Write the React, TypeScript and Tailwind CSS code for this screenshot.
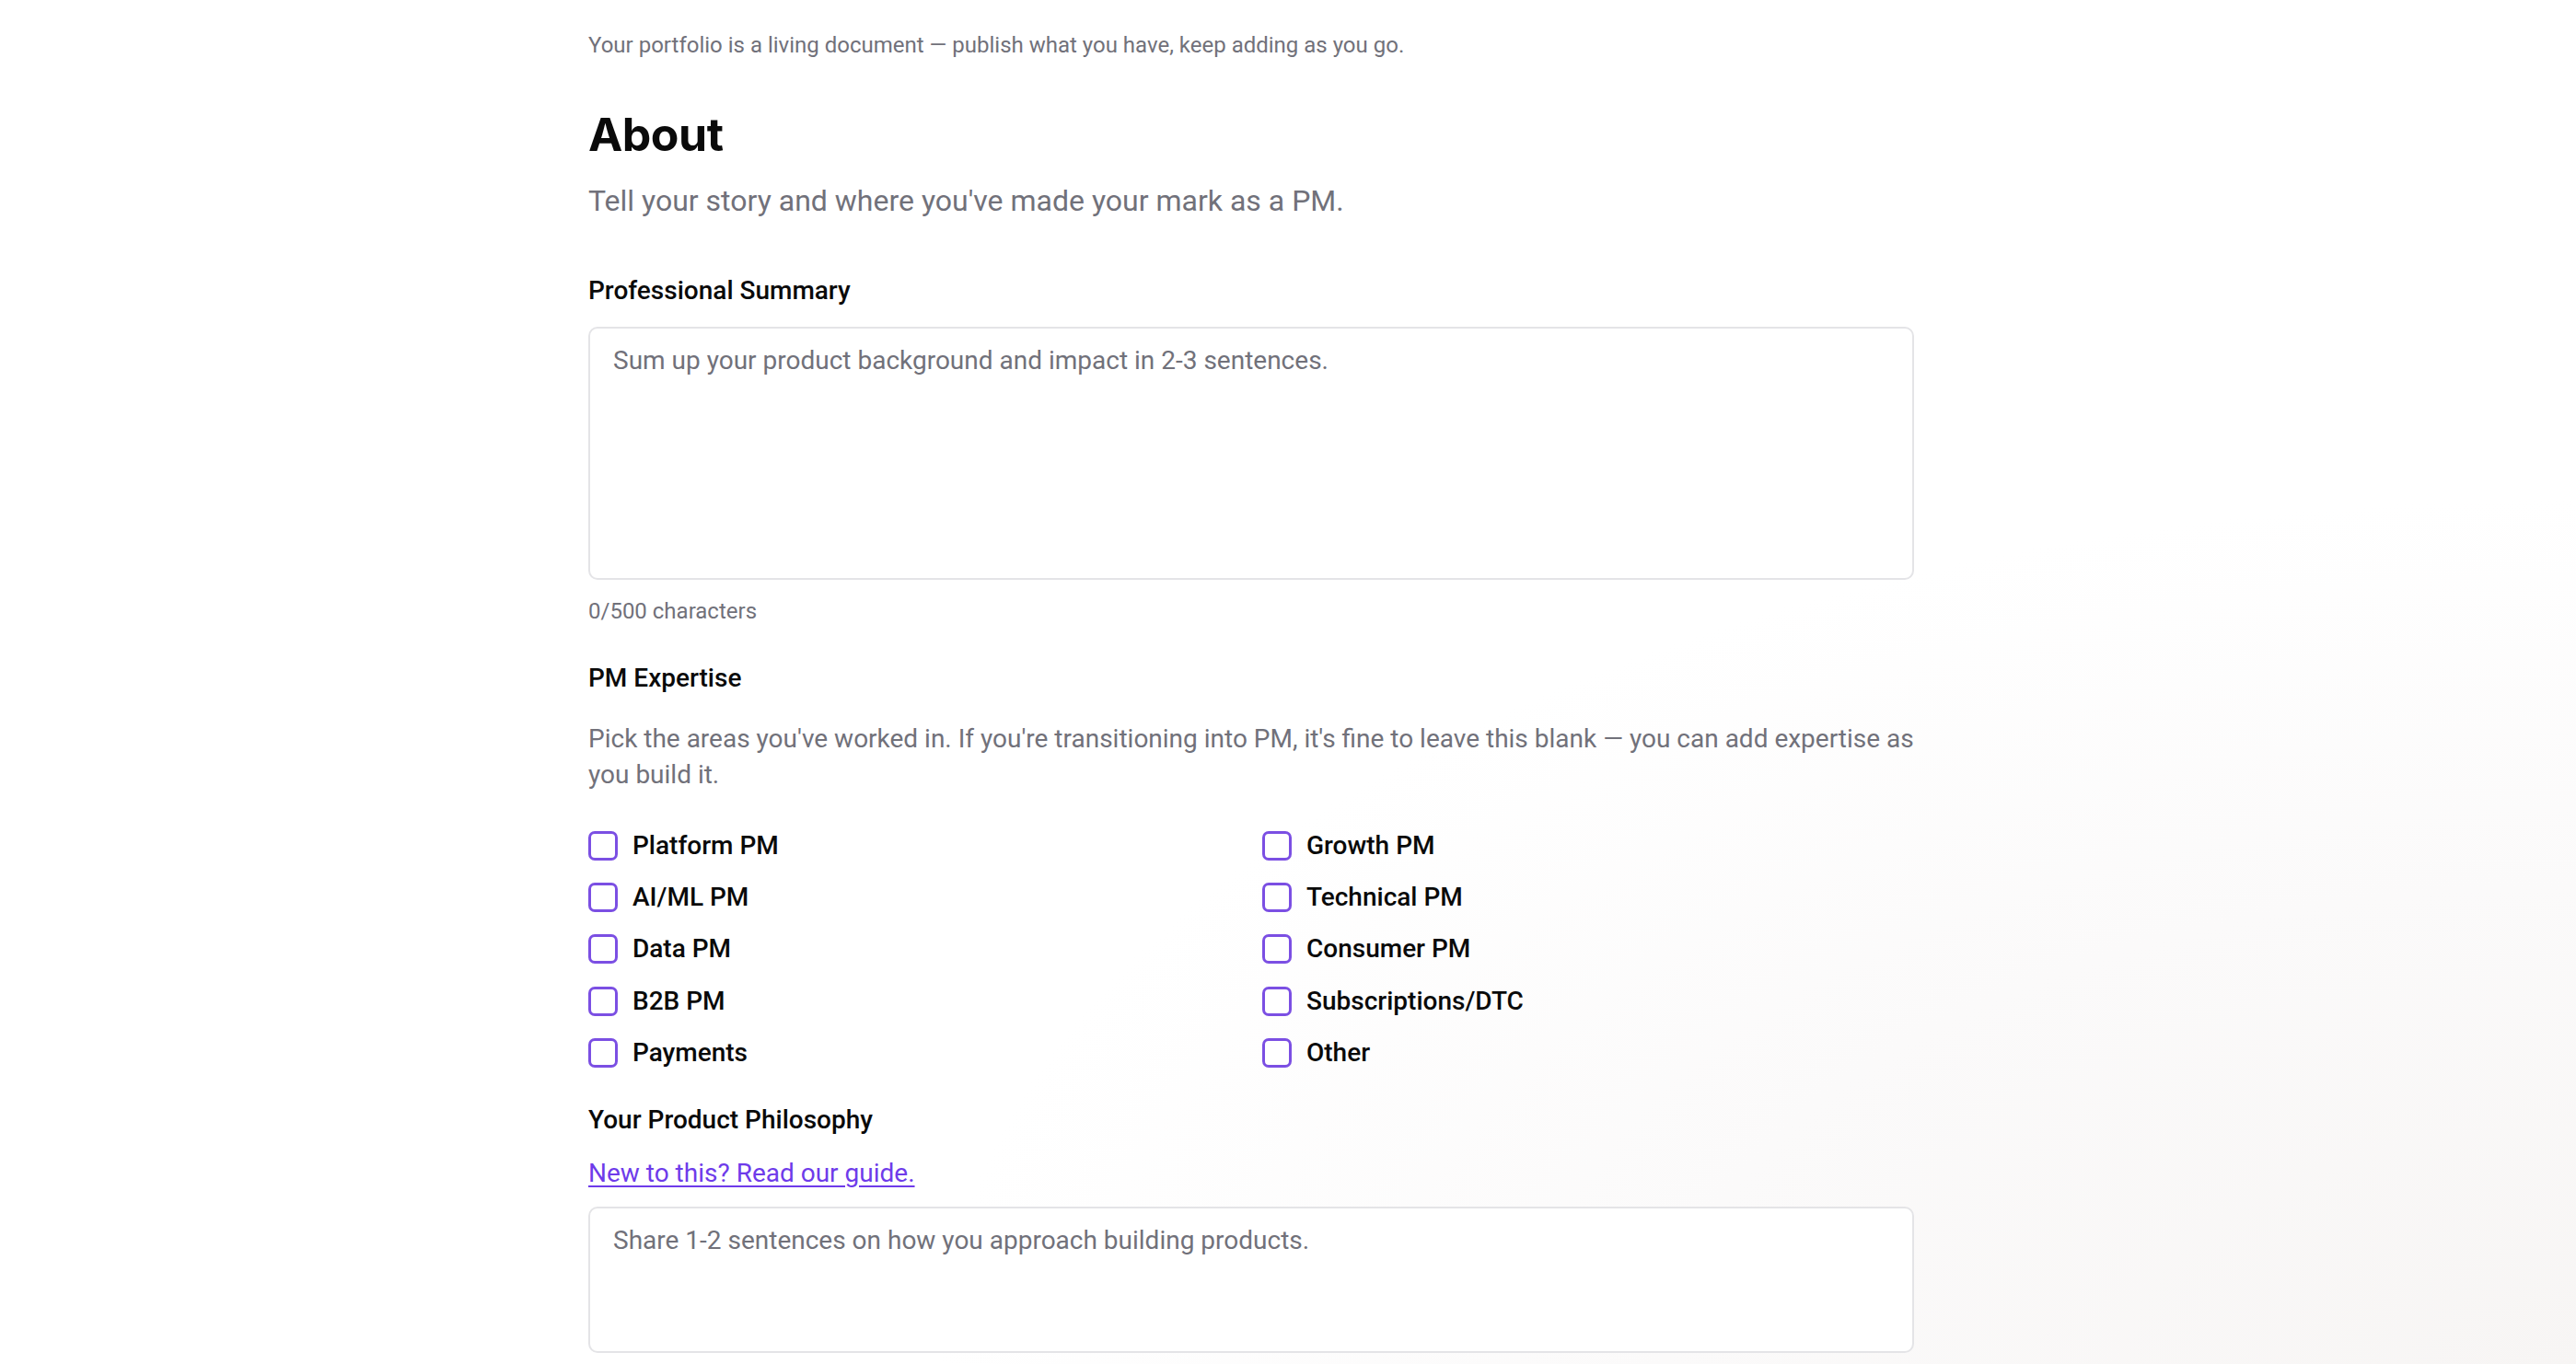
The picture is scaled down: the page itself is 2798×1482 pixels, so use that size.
import React from "react";

const expertise = [
  "Platform PM",
  "Growth PM",
  "AI/ML PM",
  "Technical PM",
  "Data PM",
  "Consumer PM",
  "B2B PM",
  "Subscriptions/DTC",
  "Payments",
  "Other",
];

function Checkbox({ label }: { label: string }) {
  return (
    <label className="flex items-center gap-[16px] h-[32px] cursor-pointer">
      <span className="w-[32px] h-[32px] shrink-0 rounded-[7px] border-[3px] border-[#7b4fe3] bg-white" />
      <span className="text-[28px] leading-[32px] font-medium text-[#0a0a0a]">{label}</span>
    </label>
  );
}

export default function App() {
  return (
    <div className="min-h-screen w-full overflow-hidden bg-white bg-[radial-gradient(ellipse_at_bottom_right,#f7f5f4_0%,#fbfafa_25%,#ffffff_45%)] font-['Roboto',sans-serif]">
      <div className="ml-[639px] w-[1440px] pt-[32px] pb-[20px] flex flex-col">
        <p className="text-[24px] leading-[34px] text-[#71717a]">
          Your portfolio is a living document — publish what you have, keep adding as you go.
        </p>

        <h1 className="mt-[50px] font-['Inter',sans-serif] text-[50px] leading-[60px] font-bold tracking-[-0.5px] text-[#0a0a0a]">
          About
        </h1>
        <p className="mt-[22px] text-[32px] leading-[40px] text-[#71717a]">
          Tell your story and where you've made your mark as a PM.
        </p>

        {/* summary */}
        <label className="mt-[58px] text-[28px] leading-[40px] font-medium text-[#0a0a0a]">
          Professional Summary
        </label>
        <textarea
          className="mt-[19px] h-[275px] w-full resize-none rounded-[10px] border-2 border-[#e4e4e7] bg-white px-[25px] py-[15px] text-[28px] leading-[40px] text-[#0a0a0a] placeholder:text-[#71717a] outline-none"
          placeholder="Sum up your product background and impact in 2-3 sentences."
        />
        <p className="mt-[17px] text-[24px] leading-[34px] text-[#71717a]">0/500 characters</p>

        {/* expertise */}
        <label className="mt-[36px] text-[28px] leading-[40px] font-medium text-[#0a0a0a]">PM Expertise</label>
        <p className="mt-[26px] text-[28px] leading-[39px] text-[#71717a]">
          Pick the areas you've worked in. If you're transitioning into PM, it's fine to leave this blank — you can add
          expertise as you build it.
        </p>
        <div className="mt-[42px] grid grid-cols-2 gap-x-6 gap-y-[24.2px]">
          {expertise.map((e) => (
            <Checkbox key={e} label={e} />
          ))}
        </div>

        {/* philosophy */}
        <label className="mt-[37px] text-[28px] leading-[40px] font-medium text-[#0a0a0a]">
          Your Product Philosophy
        </label>
        <a href="#" className="mt-[18px] w-fit text-[28px] leading-[40px] text-[#6e3bea] underline underline-offset-[4px]">
          New to this? Read our guide.
        </a>
        <textarea
          className="mt-[16px] h-[159px] w-full resize-none rounded-[10px] border-2 border-[#e4e4e7] bg-white px-[25px] py-[15px] text-[28px] leading-[40px] text-[#0a0a0a] placeholder:text-[#71717a] outline-none"
          placeholder="Share 1-2 sentences on how you approach building products."
        />
      </div>
    </div>
  );
}
